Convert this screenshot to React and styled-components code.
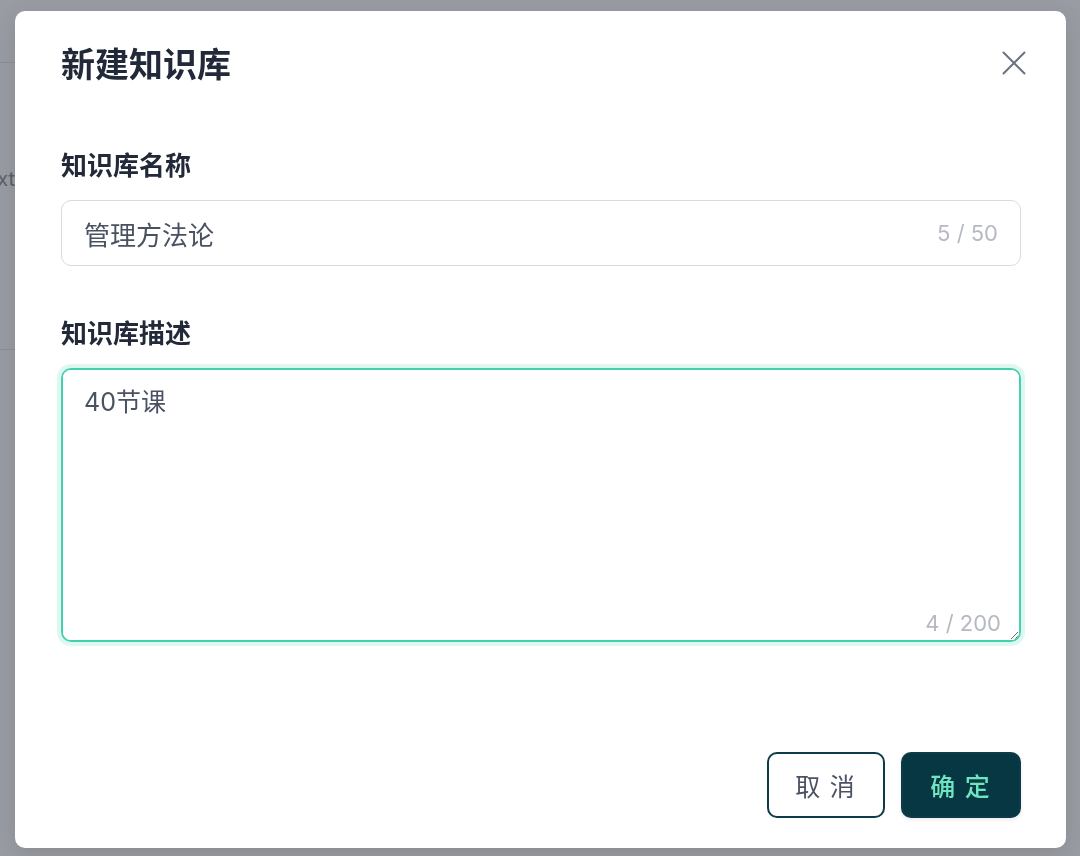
import React, { useEffect, useRef, useState } from "react";
import styled, { createGlobalStyle } from "styled-components";

const GlobalStyle = createGlobalStyle`
  html, body {
    margin: 0;
    padding: 0;
    background: #fff;
    font-family: "Inter", "Noto Sans CJK SC", sans-serif;
  }
  * {
    box-sizing: border-box;
  }
`;

const BackPage = styled.div`
  width: 1080px;
  height: 856px;
  overflow: hidden;
`;

const BackPanel = styled.div`
  width: 320px;
`;

const BackHeader = styled.div`
  height: 63px;
  border-bottom: 1px solid #e5e7eb;
`;

const BackRow = styled.div`
  height: 287px;
  border-bottom: 1px solid #e5e7eb;
  padding-top: 104px;
  font-size: 20px;
  color: #8b9099;
  white-space: nowrap;
  & span {
    margin-left: -29px;
  }
`;

const Backdrop = styled.div`
  position: fixed;
  inset: 0;
  background: rgba(30, 36, 52, 0.45);
  padding: 11px 0 0 15px;
`;

const Modal = styled.div`
  width: 1051px;
  background: #fff;
  border-radius: 10px;
  padding: 30px 45px 30px 46px;
  display: flex;
  flex-direction: column;
  box-shadow: 0 6px 24px rgba(0, 0, 0, 0.12);
`;

const Header = styled.div`
  height: 44px;
  display: flex;
  justify-content: space-between;
  align-items: center;
`;

const Title = styled.h2`
  margin: 0;
  font-size: 34px;
  line-height: 44px;
  font-weight: 700;
  color: #222a39;
  font-family: "Noto Sans CJK SC", sans-serif;
`;

const CloseButton = styled.button`
  border: none;
  background: none;
  padding: 0;
  margin-right: -5px;
  width: 24px;
  height: 24px;
  cursor: pointer;
  display: flex;
`;

const Field = styled.div`
  display: flex;
  flex-direction: column;
  gap: 18px;
  margin-top: ${(props) => props.gap}px;
`;

const Label = styled.label`
  font-size: 26px;
  line-height: 36px;
  font-weight: 700;
  color: #222a39;
  font-family: "Noto Sans CJK SC", sans-serif;
`;

const InputBox = styled.div`
  height: 66px;
  border: 1.5px solid #d9dbe0;
  border-radius: 10px;
  display: flex;
  align-items: center;
  padding: 0 22px;
`;

const TextInput = styled.input`
  flex: 1;
  border: none;
  outline: none;
  padding: 0;
  font-size: 26px;
  color: #4a5262;
  font-family: "Inter", "Noto Sans CJK SC", sans-serif;
  background: transparent;
`;

const Counter = styled.span`
  font-size: 22px;
  color: #b5bac2;
  font-family: "Inter", sans-serif;
  white-space: nowrap;
`;

const AreaBox = styled.div`
  position: relative;
  height: 274px;
  border: 2px solid #45cfae;
  border-radius: 10px;
  box-shadow: 0 0 0 4px rgba(94, 224, 190, 0.22);
  overflow: hidden;
`;

const TextArea = styled.textarea`
  width: 100%;
  height: 100%;
  border: none;
  outline: none;
  resize: vertical;
  padding: 14px 21px;
  font-size: 25px;
  line-height: 36px;
  color: #4a5262;
  caret-color: #222a39;
  font-family: "Inter", "Noto Sans CJK SC", sans-serif;
  display: block;
`;

const AreaCounter = styled(Counter)`
  position: absolute;
  right: 18px;
  bottom: 4px;
  pointer-events: none;
`;

const Footer = styled.div`
  margin-top: 110px;
  display: flex;
  justify-content: flex-end;
  gap: 16px;
`;

const Button = styled.button`
  height: 66px;
  width: ${(props) => props.w}px;
  border-radius: 10px;
  font-size: 25px;
  letter-spacing: 2px;
  font-family: "Noto Sans CJK SC", sans-serif;
  font-weight: ${(props) => (props.primary ? 500 : 400)};
  cursor: pointer;
  border: 2px solid #0e3b48;
  background: ${(props) => (props.primary ? "#073743" : "#fff")};
  color: ${(props) => (props.primary ? "#6ee5bf" : "#4b5363")};
  box-shadow: ${(props) =>
    props.primary ? "0 2px 4px rgba(0, 0, 0, 0.08)" : "none"};
`;

function CloseIcon() {
  return (
    <svg width="24" height="24" viewBox="0 0 24 24" fill="none">
      <path
        d="M1.5 1.5L22.5 22.5M22.5 1.5L1.5 22.5"
        stroke="#6b7280"
        strokeWidth="2"
        strokeLinecap="round"
      />
    </svg>
  );
}

export default function App() {
  const [name, setName] = useState("管理方法论");
  const [desc, setDesc] = useState("40节课");
  const areaRef = useRef(null);

  useEffect(() => {
    const el = areaRef.current;
    if (el) {
      el.focus();
      el.setSelectionRange(el.value.length, el.value.length);
    }
  }, []);

  return (
    <>
      <GlobalStyle />
      <BackPage>
        <BackPanel>
          <BackHeader />
          <BackRow>
            <span>Next</span>
          </BackRow>
        </BackPanel>
      </BackPage>
      <Backdrop>
        <Modal>
          <Header>
            <Title>新建知识库</Title>
            <CloseButton>
              <CloseIcon />
            </CloseButton>
          </Header>
          <Field gap={61}>
            <Label>知识库名称</Label>
            <InputBox>
              <TextInput
                value={name}
                maxLength={50}
                onChange={(e) => setName(e.target.value)}
              />
              <Counter>{name.length} / 50</Counter>
            </InputBox>
          </Field>
          <Field gap={48}>
            <Label>知识库描述</Label>
            <AreaBox>
              <TextArea
                ref={areaRef}
                value={desc}
                maxLength={200}
                onChange={(e) => setDesc(e.target.value)}
              />
              <AreaCounter>{desc.length} / 200</AreaCounter>
            </AreaBox>
          </Field>
          <Footer>
            <Button w={118}>取 消</Button>
            <Button w={120} primary>
              确 定
            </Button>
          </Footer>
        </Modal>
      </Backdrop>
    </>
  );
}
